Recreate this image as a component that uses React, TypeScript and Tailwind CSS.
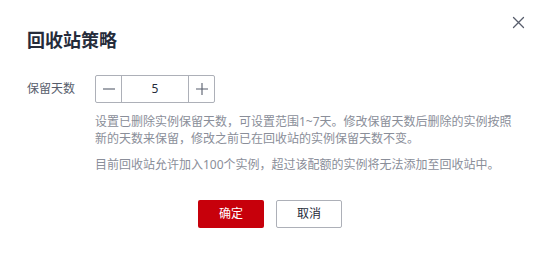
import React from "react";

export default function App() {
  const font = {
    fontFamily: '"Noto Sans", "Noto Sans CJK SC", sans-serif',
  };
  return (
    <div
      className="relative w-[540px] h-[254px] bg-white overflow-hidden"
      style={font}
    >
      <button className="absolute top-[16px] right-[15px] w-[13px] h-[13px] flex items-center justify-center">
        <svg width="13" height="13" viewBox="0 0 13 13" fill="none">
          <path
            d="M1.5 1.5 L11.5 11.5 M11.5 1.5 L1.5 11.5"
            stroke="#575d6c"
            strokeWidth="1.3"
            strokeLinecap="round"
          />
        </svg>
      </button>

      <div className="pt-[28px] pl-[27px] pr-[24px]">
        <h2 className="text-[18px] leading-[24px] font-bold text-[#252b3a]">
          回收站策略
        </h2>

        <div className="mt-[23px] flex items-center">
          <div className="w-[68px] text-[12px] leading-[18px] text-[#575d6c]">
            保留天数
          </div>
          <div className="flex h-[28px] w-[120px] border border-[#adb0b8] rounded-[2px]">
            <button className="w-[26px] h-full flex items-center justify-center border-r border-[#adb0b8]">
              <svg width="12" height="12" viewBox="0 0 12 12" fill="none">
                <path d="M0 6 H12" stroke="#575d6c" strokeWidth="1.1" />
              </svg>
            </button>
            <div className="flex-1 flex items-center justify-center text-[12px] text-[#252b3a]">
              5
            </div>
            <button className="w-[26px] h-full flex items-center justify-center border-l border-[#adb0b8]">
              <svg width="12" height="12" viewBox="0 0 12 12" fill="none">
                <path d="M0 6 H12 M6 0 V12" stroke="#575d6c" strokeWidth="1.1" />
              </svg>
            </button>
          </div>
        </div>

        <div className="mt-[10px] pl-[68px] text-[12px] leading-[17px] text-[#8a8e99]">
          <p>
            设置已删除实例保留天数，可设置范围1~7天。修改保留天数后删除的实例按照新的天数来保留，修改之前已在回收站的实例保留天数不变。
          </p>
          <p className="mt-[9px]">
            目前回收站允许加入100个实例，超过该配额的实例将无法添加至回收站中。
          </p>
        </div>
      </div>

      <div className="mt-[27px] flex justify-center gap-[12px]">
        <button className="w-[66px] h-[28px] rounded-[2px] bg-[#c7000b] text-white text-[12px]">
          确定
        </button>
        <button className="w-[66px] h-[28px] rounded-[2px] border border-[#adb0b8] bg-white text-[#252b3a] text-[12px]">
          取消
        </button>
      </div>
    </div>
  );
}
